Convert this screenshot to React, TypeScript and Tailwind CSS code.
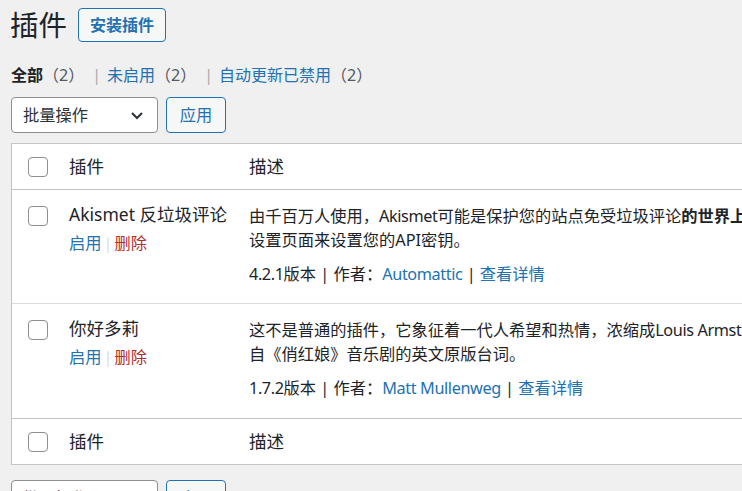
import React from "react";

const font = { fontFamily: '"Noto Sans", "Noto Sans CJK SC", sans-serif' };

function Checkbox() {
  return <div className="h-[20px] w-[20px] rounded-[4px] border border-[#8c8f94] bg-white" />;
}

function HeadRow({ top }: { top?: boolean }) {
  return (
    <div className={`flex h-[46px] items-center ${top ? "border-b border-[#c3c4c7]" : "border-t border-[#c3c4c7]"}`}>
      <div className="flex w-[46px] shrink-0 pl-[16px]">
        <Checkbox />
      </div>
      <div className="w-[180px] shrink-0 pl-[11px] text-[17.5px] text-[#1d2327]">插件</div>
      <div className="flex-1 pl-[11px] text-[17.5px] text-[#1d2327]">描述</div>
    </div>
  );
}

function PluginRow({
  name,
  line1,
  line2,
  version,
  author,
  last,
}: {
  name: string;
  line1: React.ReactNode;
  line2: React.ReactNode;
  version: string;
  author: string;
  last?: boolean;
}) {
  return (
    <div className={`flex ${last ? "h-[114px]" : "h-[114px] border-b border-[#dcdcde]"}`}>
      <div className="flex w-[46px] shrink-0 pl-[16px] pt-[16px]">
        <Checkbox />
      </div>
      <div className="w-[180px] shrink-0 pl-[11px] pt-[12px]">
        <div className="whitespace-nowrap text-[17.5px] leading-[25px] text-[#1d2327]">{name}</div>
        <div className="mt-[4px] text-[16.25px] leading-[25px]">
          <span className="text-[#2271b1]">启用</span>
          <span className="px-[2px] text-[#dcdcde]">|</span>
          <span className="text-[#b32d2e]">删除</span>
        </div>
      </div>
      <div className="min-w-0 flex-1 overflow-hidden pl-[11px] pt-[14px] text-[16.25px] text-[#1d2327]">
        <div className="whitespace-nowrap leading-[24px]">{line1}</div>
        <div className="whitespace-nowrap leading-[24px]">{line2}</div>
        <div className="mt-[10px] whitespace-nowrap leading-[24px]">
          <span className="tracking-[-0.4px]">{version}</span>版本 | 作者：
          <span className="tracking-[-0.4px] text-[#2271b1]">{author}</span> | <span className="text-[#2271b1]">查看详情</span>
        </div>
      </div>
    </div>
  );
}

function Bulk() {
  return (
    <div className="flex gap-[8px]">
      <div className="flex h-[36px] w-[147px] items-center justify-between rounded-[4px] border border-[#8c8f94] bg-white pl-[11px] pr-[12px] text-[16.25px] text-[#2c3338]">
        <span>批量操作</span>
        <svg width="16" height="16" viewBox="0 0 16 16">
          <path d="M3 6l5 5 5-5" fill="none" stroke="#2c3338" strokeWidth="2" />
        </svg>
      </div>
      <div className="flex h-[36px] w-[60px] items-center justify-center rounded-[4px] border border-[#2271b1] bg-[#f6f7f7] text-[16.25px] text-[#2271b1]">
        应用
      </div>
    </div>
  );
}

export default function App() {
  return (
    <div className="h-[491px] w-[742px] overflow-hidden bg-[#f0f0f1]" style={font}>
      <div className="w-[1000px] pl-[11px]">
        <div className="flex items-center gap-[11px] pt-[8px]">
          <h1 className="ml-[-1px] text-[28.5px] leading-[34px] text-[#1d2327]">插件</h1>
          <div className="flex h-[34px] items-center rounded-[4px] border border-[#2271b1] bg-[#f6f7f7] px-[11px] text-[16px] font-bold text-[#2271b1]">
            安装插件
          </div>
        </div>
        <div className="mt-[21px] flex h-[24px] items-center text-[16px] leading-[24px]">
          <span className="font-bold text-[#1d2327]">全部</span>
          <span className="text-[#50575e]">（2）</span>
          <span className="ml-[8px] mr-[6px] text-[#a7aaad]">|</span>
          <span className="text-[#2271b1]">未启用</span>
          <span className="text-[#50575e]">（2）</span>
          <span className="ml-[8px] mr-[6px] text-[#a7aaad]">|</span>
          <span className="text-[#2271b1]">自动更新已禁用</span>
          <span className="text-[#50575e]">（2）</span>
        </div>
        <div className="mt-[10px]">
          <Bulk />
        </div>
        <div className="mt-[10px] border border-[#c3c4c7] bg-white">
          <HeadRow top />
          <PluginRow
            name="Akismet 反垃圾评论"
            line1={
              <>
                由千百万人使用，<span className="tracking-[-0.4px]">Akismet</span>可能是保护您的站点免受垃圾评论<strong className="font-bold">的世界上最好的方法</strong>。
              </>
            }
            line2="设置页面来设置您的API密钥。"
            version="4.2.1"
            author="Automattic"
          />
          <PluginRow
            name="你好多莉"
            line1={
              <>
                这不是普通的插件，它象征着一代人希望和热情，浓缩成<span className="tracking-[-0.4px]">Louis Armstrong</span>的四个字：你好，多莉。
              </>
            }
            line2="自《俏红娘》音乐剧的英文原版台词。"
            version="1.7.2"
            author="Matt Mullenweg"
            last
          />
          <HeadRow />
        </div>
        <div className="mt-[15px]">
          <Bulk />
        </div>
      </div>
    </div>
  );
}
